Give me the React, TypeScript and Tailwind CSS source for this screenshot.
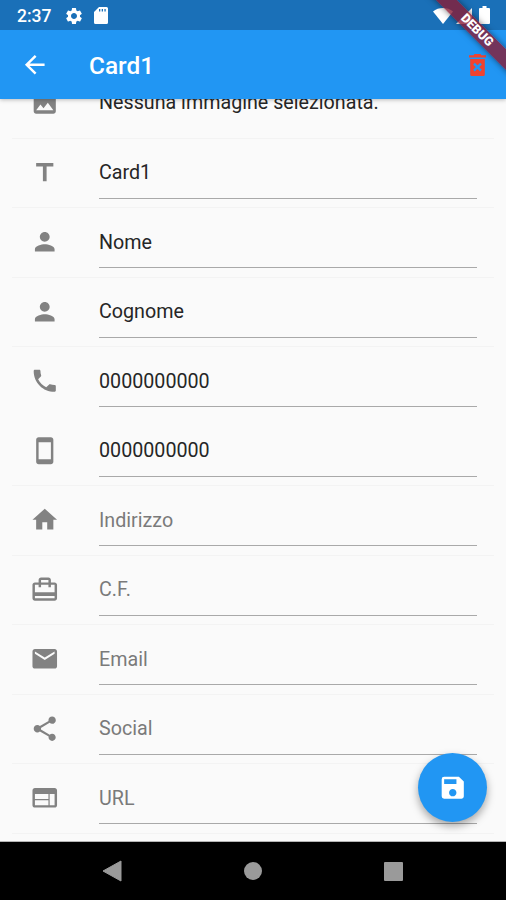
import type { IconType } from "react-icons"
import {
  MdArrowBack,
  MdCardTravel,
  MdEmail,
  MdHome,
  MdImage,
  MdPerson,
  MdPhone,
  MdSave,
  MdSettings,
  MdShare,
  MdTitle,
  MdWeb,
} from "react-icons/md"

type Field = {
  id: string
  icon: IconType
  text: string
  filled?: boolean
  divider?: boolean
}

const PhoneOutline: IconType = ({ size, className }) => (
  <svg width={size} height={size} viewBox="0 0 24 24" className={className}>
    <path
      fill="currentColor"
      d="M17 1.010L7 1c-1.100 0-1.990.9-1.990 2v18c0 1.100.89 2 1.990 2h10c1.100 0 2-.9 2-2V3c0-1.100-.9-1.990-2-1.990zM17 19H7V5h10v14z"
    />
  </svg>
)

const fields: Field[] = [
  { id: "title", icon: MdTitle, text: "Card1", filled: true, divider: true },
  { id: "name", icon: MdPerson, text: "Nome", filled: true, divider: true },
  { id: "surname", icon: MdPerson, text: "Cognome", filled: true, divider: true },
  { id: "phone", icon: MdPhone, text: "0000000000", filled: true },
  { id: "mobile", icon: PhoneOutline, text: "0000000000", filled: true, divider: true },
  { id: "address", icon: MdHome, text: "Indirizzo", divider: true },
  { id: "cf", icon: MdCardTravel, text: "C.F.", divider: true },
  { id: "email", icon: MdEmail, text: "Email", divider: true },
  { id: "social", icon: MdShare, text: "Social", divider: true },
  { id: "url", icon: MdWeb, text: "URL", divider: true },
]

function StatusBar() {
  return (
    <div className="flex h-[30px] items-center bg-[#1a70b8] pl-[17px] pr-[16px] pt-[2px] text-white">
      <span className="mt-px w-[47px] text-[17.500px] font-medium leading-none">2:37</span>
      <MdSettings size={20} className="-mt-px" />
      <svg className="ml-[10px] -mt-px" width="14" height="17" viewBox="0 0 14 17">
        <path
          fill="currentColor"
          fillRule="evenodd"
          d="M5 0h7.5A1.5 1.5 0 0 1 14 1.5v14a1.5 1.5 0 0 1-1.5 1.5h-11A1.5 1.5 0 0 1 0 15.500V5zM5 2v2.500h1.300V2zm2.700 0v2.500H9V2zm2.700 0v2.500h1.300V2z"
        />
      </svg>
      <svg className="ml-auto -mt-px" width="20" height="16" viewBox="0 0 20 16">
        <path fill="currentColor" d="M0 3.500C5.500-1.100 14.500-1.100 20 3.500L10 16z" />
      </svg>
      <svg className="ml-[3px] -mt-px" width="16" height="16" viewBox="0 0 16 16">
        <path fill="currentColor" d="M16 0v16H0z" />
      </svg>
      <svg className="ml-[7px] -mt-[2px]" width="11" height="18" viewBox="0 0 11 18">
        <path
          fill="currentColor"
          d="M3.500 0h4v2H10a1 1 0 0 1 1 1v14a1 1 0 0 1-1 1H1a1 1 0 0 1-1-1V3a1 1 0 0 1 1-1h2.500z"
        />
      </svg>
    </div>
  )
}

function TrashIcon() {
  return (
    <svg className="ml-auto text-[#f0432f]" width="17" height="22" viewBox="0 0 17 22">
      <path
        fill="currentColor"
        d="M0 1.200h4.500L5.500 0h6l1 1.200H17v2.300H0zM1.200 4.900h14.600V20.500a1.500 1.500 0 0 1-1.500 1.500H2.700a1.500 1.500 0 0 1-1.500-1.500z"
      />
      <path stroke="#2196f3" strokeWidth="2.400" d="M5 9.700l7 7M12 9.700l-7 7" />
    </svg>
  )
}

function FieldRow({ field }: { field: Field }) {
  const Icon = field.icon
  return (
    <div className="relative flex h-[69.500px] shrink-0 pl-[18px] pr-[17px]">
      <Icon size={29.5} className="mt-[19px] shrink-0 text-[#828282]" />
      <div
        className={
          "ml-[39.500px] h-[60px] flex-1 border-b border-[#a9a9a9] pt-[22.500px] text-[19.700px] leading-[24px] " +
          (field.filled ? "text-[#262626]" : "text-[#7a7a7a]")
        }
      >
        {field.text}
      </div>
      {field.divider && <div className="absolute inset-x-0 bottom-0 h-px bg-[#f3f3f3]" />}
    </div>
  )
}

export default function App() {
  return (
    <div className="relative flex h-[900px] w-[506px] flex-col overflow-hidden bg-[#fafafa] font-['Roboto',sans-serif]">
      <header className="relative z-10 shrink-0 shadow-[0_1px_4px_rgba(0,0,0,0.25)]">
        <StatusBar />
        <div className="flex h-[69px] items-center bg-[#2196f3] pl-[20px] pr-[20px] text-white">
          <MdArrowBack size={29.5} />
          <h1 className="ml-[39.500px] mt-[3px] text-[24.400px] font-medium leading-none">Card1</h1>
          <TrashIcon />
        </div>
      </header>

      <main className="flex h-[743px] shrink-0 flex-col px-[12px]">
        <div className="relative flex h-[39.500px] shrink-0 pl-[18px]">
          <MdImage size={29.5} className="mt-[-11px] shrink-0 text-[#828282]" />
          <span className="ml-[39.500px] mt-[-8px] text-[19.700px] leading-[24px] text-[#262626]">
            Nessuna immagine selezionata.
          </span>
          <div className="absolute inset-x-0 bottom-0 h-px bg-[#f3f3f3]" />
        </div>
        {fields.map((field) => (
          <FieldRow key={field.id} field={field} />
        ))}
      </main>

      <nav className="flex h-[58px] shrink-0 items-center justify-between bg-black pl-[102px] pr-[103px] text-[#9a9a9a] shadow-[0_-1px_0_#b5b5b5]">
        <svg width="20" height="22" viewBox="0 0 20 22">
          <path fill="currentColor" d="M19 1v20L1 11z" stroke="currentColor" strokeLinejoin="round" />
        </svg>
        <div className="size-[18px] rounded-full bg-[#9a9a9a]" />
        <div className="size-[19px] rounded-[1px] bg-[#9a9a9a]" />
      </nav>

      <button className="absolute left-[418px] top-[753px] z-10 flex size-[69px] items-center justify-center rounded-full bg-[#2196f3] text-white shadow-[0_4px_8px_rgba(0,0,0,0.35)]">
        <MdSave size={29.5} />
      </button>

      <div className="absolute left-[407px] top-[22.500px] z-20 flex h-[14.500px] w-[140px] rotate-45 items-center justify-center bg-[#881c35]/80 text-[12.500px] font-black leading-none text-white shadow-[0_0_6px_rgba(0,0,0,0.5)]">
        DEBUG
      </div>
    </div>
  )
}
